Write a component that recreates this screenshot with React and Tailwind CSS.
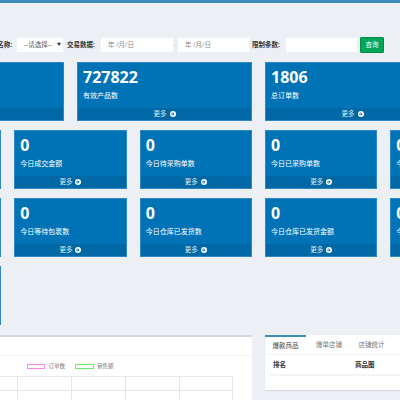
import React from "react";

const topCards = [
  { value: "96", label: "商品总数" },
  { value: "727822", label: "有效产品数" },
  { value: "1806", label: "总订单数" },
  { value: "12", label: "店铺数" },
];

const gridCards = [
  { value: "0", label: "今日订单数" },
  { value: "0", label: "今日成交金额" },
  { value: "0", label: "今日待采购单数" },
  { value: "0", label: "今日已采购单数" },
  { value: "0", label: "今日采购金额" },
  { value: "0", label: "今日到货单数" },
  { value: "0", label: "今日已打包数" },
  { value: "0", label: "今日等待包裹数" },
  { value: "0", label: "今日仓库已发货数" },
  { value: "0", label: "今日仓库已发货金额" },
  { value: "0", label: "今日退款单数" },
  { value: "0", label: "今日退款金额" },
  { value: "0", label: "今日异常单数" },
];

function MoreIcon() {
  return (
    <svg className="w-[6px] h-[6px] ml-[3px]" viewBox="0 0 16 16">
      <circle cx="8" cy="8" r="8" fill="#fff" />
      <path d="M4 8h6M7.5 4.8L10.8 8 7.5 11.2" fill="none" stroke="#0068a5" strokeWidth="2.4" strokeLinecap="round" strokeLinejoin="round" />
    </svg>
  );
}

function StatCard({ value, label }) {
  return (
    <div className="h-[59px] flex flex-col bg-[#0073b7] border border-[#2f88c6] text-white">
      <div className="flex-1 pl-[5px] pt-[6px]">
        <div className="text-[16px] font-bold leading-none">{value}</div>
        <div className="text-[7px] leading-none mt-[7px]">{label}</div>
      </div>
      <div className="h-[12px] bg-[#0068a5] flex items-center justify-center text-[6.5px] text-[#dbe9f3]">
        更多
        <MoreIcon />
      </div>
    </div>
  );
}

export default function App() {
  return (
    <div className="w-[400px] h-[400px] overflow-hidden bg-[#ecf0f5] font-['Open_Sans','Noto_Sans_CJK_SC',sans-serif]">
      <div className="h-[3px] bg-[#3c8dbc]" />

      <div className="ml-[-111px] w-[739px]">
        {/* filter bar */}
        <div className="mt-[34px] h-[16px] flex items-center text-[6.5px] text-[#333] whitespace-nowrap">
          <span className="w-[123px] shrink-0 text-right font-bold">店铺名称:</span>
          <div className="ml-[5px] w-[46px] shrink-0 h-[14px] bg-white flex items-center justify-between pl-[7px] pr-[2px] text-[#555]">
            <span>--请选择--</span>
            <span className="text-[4px] text-[#222]">▼</span>
          </div>
          <span className="ml-[4px] w-[30px] shrink-0 font-bold">交易数据:</span>
          <div className="ml-[4px] w-[72px] shrink-0 h-[14px] bg-white flex items-center pl-[7px] text-[#888]">年 /月/日</div>
          <span className="w-[5px] shrink-0 text-center text-[#aaa]">-</span>
          <div className="w-[71px] shrink-0 h-[14px] bg-white flex items-center pl-[7px] text-[#888]">年 /月/日</div>
          <span className="ml-[3px] w-[33px] shrink-0 font-bold">限制条数:</span>
          <div className="ml-[1px] w-[71px] shrink-0 h-[14px] bg-white" />
          <button className="ml-[3px] w-[24px] shrink-0 h-[16px] bg-[#00a65a] border border-[#008d4c] rounded-[1px] text-white text-[6.5px]">查询</button>
        </div>

        {/* top summary */}
        <div className="mt-[9px] grid grid-cols-4 gap-x-[13px]">
          {topCards.map((c) => (
            <StatCard key={c.label} value={c.value} label={c.label} />
          ))}
        </div>

        {/* daily stats */}
        <div className="mt-[9px] grid grid-cols-6 gap-x-[13px] gap-y-[9px]">
          {gridCards.map((c) => (
            <StatCard key={c.label} value={c.value} label={c.label} />
          ))}
        </div>

        {/* bottom panels */}
        <div className="mt-[10px] grid grid-cols-2 gap-x-[13px]">
          <div className="h-[70px] bg-white border-t-2 border-[#d2d6de]">
            <div className="h-[19px] border-b border-[#f4f4f4]" />
            <div className="mt-[8px] flex items-center justify-center text-[5.5px] leading-none text-[#777]">
              <span className="w-[18px] h-[5px] border-[1.5px] border-[#ff85ea]" />
              <span className="ml-[3px]">订单数</span>
              <span className="ml-[10px] w-[19px] h-[5px] border-[1.5px] border-[#66f066]" />
              <span className="ml-[3px]">销售额</span>
            </div>
            <svg className="mt-[3px] block" width="363" height="30" viewBox="0 0 363 30">
              <g stroke="#e6e6e6" strokeWidth="1">
                <path d="M40 3.5H343.5M40 17.5H343.5" />
                <path d="M128.5 3V30M182.5 3V30M236.5 3V30M290.5 3V30M343.5 3V30" />
              </g>
            </svg>
          </div>

          <div className="h-[55px] bg-white shadow-[0_1px_1px_rgba(0,0,0,0.1)]">
            <div className="flex h-[20px] border-b border-[#f4f4f4] text-[6.5px] text-[#777]">
              <div className="w-[41px] border-t-2 border-[#3c8dbc] flex items-center justify-center text-[#444]">爆款商品</div>
              <div className="w-[46px] flex items-center justify-center">爆单店铺</div>
              <div className="w-[39px] flex items-center justify-center">店铺统计</div>
            </div>
            <div className="mx-[5px] h-[21px] border-b-2 border-[#f4f4f4] flex items-center text-[6.5px] font-bold text-[#333]">
              <span className="ml-[3px] w-[82px]">排名</span>
              <span>商品图</span>
            </div>
          </div>
        </div>
      </div>
    </div>
  );
}
